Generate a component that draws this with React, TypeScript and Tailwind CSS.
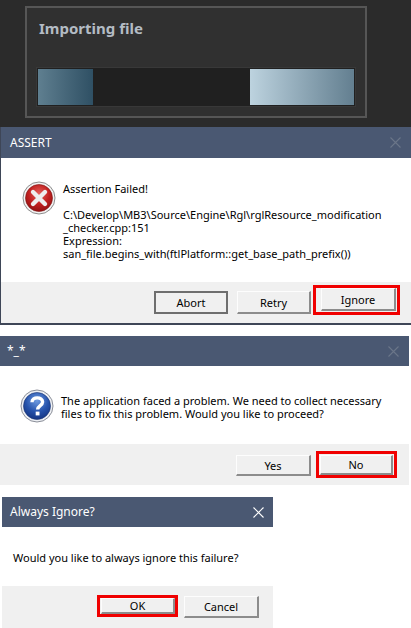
const ErrorIcon = () => (
    <svg width="34" height="34" viewBox="0 0 34 34" className="shrink-0">
        <defs>
            <radialGradient id="errFill" cx="50%" cy="35%" r="70%">
                <stop offset="0%" stopColor="#e8605c" />
                <stop offset="55%" stopColor="#c0201f" />
                <stop offset="100%" stopColor="#8a0f10" />
            </radialGradient>
        </defs>
        <circle cx="17" cy="17" r="16" fill="#f2f2f2" stroke="#8d8d8d" strokeWidth="1" />
        <circle cx="17" cy="17" r="13.5" fill="url(#errFill)" stroke="#7d1414" strokeWidth="0.6" />
        <path d="M11 11 L23 23 M23 11 L11 23" stroke="#eeeeee" strokeWidth="4.4" strokeLinecap="round" />
    </svg>
);

const QuestionIcon = () => (
    <svg width="34" height="34" viewBox="0 0 34 34" className="shrink-0">
        <defs>
            <radialGradient id="askFill" cx="50%" cy="30%" r="75%">
                <stop offset="0%" stopColor="#6f9be0" />
                <stop offset="55%" stopColor="#2653ac" />
                <stop offset="100%" stopColor="#12307c" />
            </radialGradient>
        </defs>
        <circle cx="17" cy="17" r="16" fill="#eef0f4" stroke="#8b8f99" strokeWidth="1" />
        <circle cx="17" cy="17" r="13.5" fill="url(#askFill)" stroke="#173270" strokeWidth="0.6" />
        <path d="M12 13.2 C12 7.5 22.6 7.5 22.6 13 C22.6 16.6 17.6 16.6 17.6 20.6" fill="none" stroke="#ffffff" strokeWidth="3.4" />
        <rect x="15.7" y="22.6" width="3.8" height="3.8" fill="#ffffff" />
    </svg>
);

const CloseIcon = ({ color }: { color: string }) => (
    <svg width="11" height="11" viewBox="0 0 11 11" stroke={color} strokeWidth="1.1">
        <path d="M0.5 0.5 L10.5 10.5 M10.5 0.5 L0.5 10.5" />
    </svg>
);

const WinButton = ({ label, size = "w-[75px] h-[23px]", edge = "border border-[#8c8c8c] border-t-[#fdfdfd] border-l-[#fdfdfd] border-r-2 border-b-2" }: { label: string; size?: string; edge?: string }) => (
    <div className={`${size} ${edge} flex items-center justify-center bg-[#f0f0f0] text-black text-[11px] leading-none`}>
        {label}
    </div>
);

const RedMark = ({ pad, children }: { pad: string; children: React.ReactNode }) => (
    <div className={`border-[3px] border-[#f00000] ${pad}`}>{children}</div>
);

const TitleBar = ({ title, closeColor, cls }: { title: string; closeColor: string; cls: string }) => (
    <div className={`bg-[#4a5872] flex items-center justify-between text-white ${cls}`}>
        <span className="text-[12px] leading-none">{title}</span>
        <CloseIcon color={closeColor} />
    </div>
);

export default function App() {
    return (
        <div className="w-[411px] h-[628px] overflow-hidden bg-white font-['Noto_Sans','Open_Sans',sans-serif]">
            <div className="h-[127px] bg-[#2b2b2b] pt-[6px] pl-[25px]">
                <div className="w-[342px] h-[112px] bg-[#303030] border-2 border-[#565656] pl-[9px] flex flex-col">
                    <h1 className="pl-[3px] mt-[8px] h-[24px] text-[15px] leading-[24px] font-bold text-[#b4bcc4]">Importing file</h1>
                    <div className="mt-[27px] w-[320px] h-[40px] border border-[#383838] bg-[#202020] p-[1px] flex justify-between">
                        <div className="w-[55px] bg-gradient-to-r from-[#5f7f90] to-[#2f5064]" />
                        <div className="w-[104px] bg-gradient-to-r from-[#bdd3df] to-[#637f90]" />
                    </div>
                </div>
            </div>

            <div className="h-[198px] border-l border-b-2 border-[#3e4657] flex flex-col">
                <TitleBar title="ASSERT" closeColor="#6b7689" cls="h-[31px] pl-[9px] pr-[10px]" />
                <div className="flex-1 flex items-start pl-[21px] pt-[23px] gap-[7px] text-[11px] leading-[13px] text-black">
                    <ErrorIcon />
                    <div className="pt-[1px] whitespace-pre">
                        <p>Assertion Failed!</p>
                        <p className="mt-[13px]">C:\Develop\MB3\Source\Engine\Rgl\rglResource_modification</p>
                        <p>_checker.cpp:151</p>
                        <p>Expression:</p>
                        <p>san_file.begins_with(ftlPlatform::get_base_path_prefix())</p>
                    </div>
                </div>
                <div className="h-[41px] bg-[#f0f0f0] flex items-start justify-end pr-[11px] pt-[3px]">
                    <div className="pt-[6px]"><WinButton label="Abort" size="w-[74px] h-[23px]" edge="border-2 border-[#6e6e6e]" /></div>
                    <div className="pt-[6px] ml-[9px]"><WinButton label="Retry" size="w-[74px] h-[23px]" /></div>
                    <div className="ml-[2px]">
                        <RedMark pad="pl-[5px] pr-[1px] pb-[1px]"><WinButton label="Ignore" /></RedMark>
                    </div>
                </div>
            </div>

            <div className="mt-[11px] h-[149px] w-[409px] flex flex-col">
                <TitleBar title="*_*" closeColor="#6b7689" cls="h-[30px] pl-[7px] pr-[10px]" />
                <div className="flex-1 flex items-start pl-[20px] pt-[23px] gap-[7px] text-[11px] leading-[13px] text-black">
                    <QuestionIcon />
                    <div className="pt-[5px] whitespace-pre">
                        <p>The application faced a problem. We need to collect necessary</p>
                        <p>files to fix this problem. Would you like to proceed?</p>
                    </div>
                </div>
                <div className="h-[41px] bg-[#f0f0f0] flex items-start justify-end gap-[5px] pr-[12px] pt-[7px]">
                    <div className="pt-[4px]"><WinButton label="Yes" size="w-[75px] h-[21px]" /></div>
                    <RedMark pad="px-[1px] pt-[1px]"><WinButton label="No" size="w-[73px] h-[20px]" /></RedMark>
                </div>
            </div>

            <div className="mt-[12px] ml-[2px] w-[271px] h-[131px] flex flex-col">
                <TitleBar title="Always Ignore?" closeColor="#ffffff" cls="h-[30px] pl-[8px] pr-[9px]" />
                <div className="h-[59px] pl-[11px] pt-[24px] text-[11px] leading-[13px] text-black">
                    Would you like to always ignore this failure?
                </div>
                <div className="flex-1 bg-[#f0f0f0] flex items-start pl-[95px] gap-[6px] pt-[9px]">
                    <RedMark pad="pl-[1px]"><WinButton label="OK" size="w-[74px] h-[16px]" /></RedMark>
                    <div className="pt-[1px]"><WinButton label="Cancel" size="w-[75px] h-[22px]" /></div>
                </div>
            </div>
        </div>
    );
}
